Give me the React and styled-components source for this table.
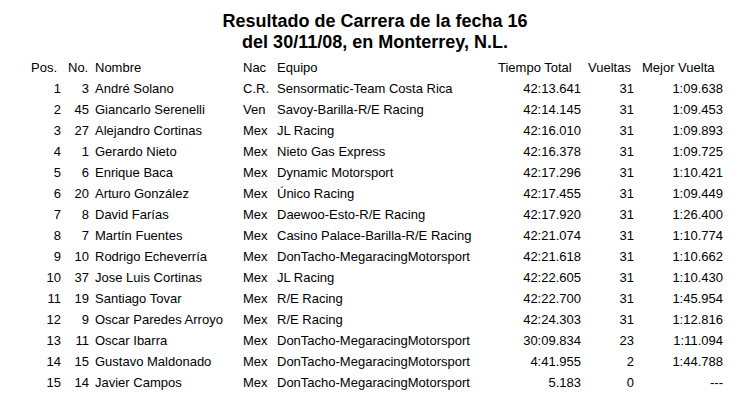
import React from "react";
import styled, { createGlobalStyle } from "styled-components";

const Global = createGlobalStyle`
  html, body { margin: 0; padding: 0; background: #fff; }
  body { font-family: "Liberation Sans", Arial, Helvetica, sans-serif; color: #000; }
`;

const Page = styled.div`
  width: 692px;
  padding: 11px 0 0 31px;
`;

const Title = styled.h1`
  margin: 0 0 4px 0;
  font-size: 18px;
  line-height: 21px;
  font-weight: bold;
  text-align: center;
  padding-right: 4px;
`;

const Table = styled.div`
  display: grid;
  grid-template-columns: 30px 28px 154px 34px 220px 84px 53px 89px;
  font-size: 13px;
  line-height: 21px;
`;

const Cell = styled.div`
  white-space: nowrap;
  text-align: ${(p) => (p.$right ? "right" : "left")};
  padding-left: ${(p) => p.$pl || 0}px;
`;

const headers = [
  { t: "Pos.", pl: 0 },
  { t: "No.", pl: 7 },
  { t: "Nombre", pl: 6 },
  { t: "Nac", pl: 0 },
  { t: "Equipo", pl: 0 },
  { t: "Tiempo Total", pl: 1 },
  { t: "Vueltas", pl: 7 },
  { t: "Mejor Vuelta", pl: 8 },
];

const rows = [
  [1, 3, "André Solano", "C.R.", "Sensormatic-Team Costa Rica", "42:13.641", 31, "1:09.638"],
  [2, 45, "Giancarlo Serenelli", "Ven", "Savoy-Barilla-R/E Racing", "42:14.145", 31, "1:09.453"],
  [3, 27, "Alejandro Cortinas", "Mex", "JL Racing", "42:16.010", 31, "1:09.893"],
  [4, 1, "Gerardo Nieto", "Mex", "Nieto Gas Express", "42:16.378", 31, "1:09.725"],
  [5, 6, "Enrique Baca", "Mex", "Dynamic Motorsport", "42:17.296", 31, "1:10.421"],
  [6, 20, "Arturo González", "Mex", "Único Racing", "42:17.455", 31, "1:09.449"],
  [7, 8, "David Farías", "Mex", "Daewoo-Esto-R/E Racing", "42:17.920", 31, "1:26.400"],
  [8, 7, "Martín Fuentes", "Mex", "Casino Palace-Barilla-R/E Racing", "42:21.074", 31, "1:10.774"],
  [9, 10, "Rodrigo Echeverría", "Mex", "DonTacho-MegaracingMotorsport", "42:21.618", 31, "1:10.662"],
  [10, 37, "Jose Luis Cortinas", "Mex", "JL Racing", "42:22.605", 31, "1:10.430"],
  [11, 19, "Santiago Tovar", "Mex", "R/E Racing", "42:22.700", 31, "1:45.954"],
  [12, 9, "Oscar Paredes Arroyo", "Mex", "R/E Racing", "42:24.303", 31, "1:12.816"],
  [13, 11, "Oscar Ibarra", "Mex", "DonTacho-MegaracingMotorsport", "30:09.834", 23, "1:11.094"],
  [14, 15, "Gustavo Maldonado", "Mex", "DonTacho-MegaracingMotorsport", "4:41.955", 2, "1:44.788"],
  [15, 14, "Javier Campos", "Mex", "DonTacho-MegaracingMotorsport", "5.183", 0, "---"],
];

const rightCols = [true, true, false, false, false, true, true, true];
const padCols = [0, 0, 6, 0, 0, 0, 0, 0];

export default function App() {
  return (
    <>
      <Global />
      <Page>
        <Title>
          Resultado de Carrera de la fecha 16
          <br />
          del 30/11/08, en Monterrey, N.L.
        </Title>
        <Table>
          {headers.map((h) => (
            <Cell key={h.t} $pl={h.pl}>
              {h.t}
            </Cell>
          ))}
          {rows.map((r) =>
            r.map((v, i) => (
              <Cell key={`${r[0]}-${i}`} $right={rightCols[i]} $pl={padCols[i]}>
                {v}
              </Cell>
            ))
          )}
        </Table>
      </Page>
    </>
  );
}
